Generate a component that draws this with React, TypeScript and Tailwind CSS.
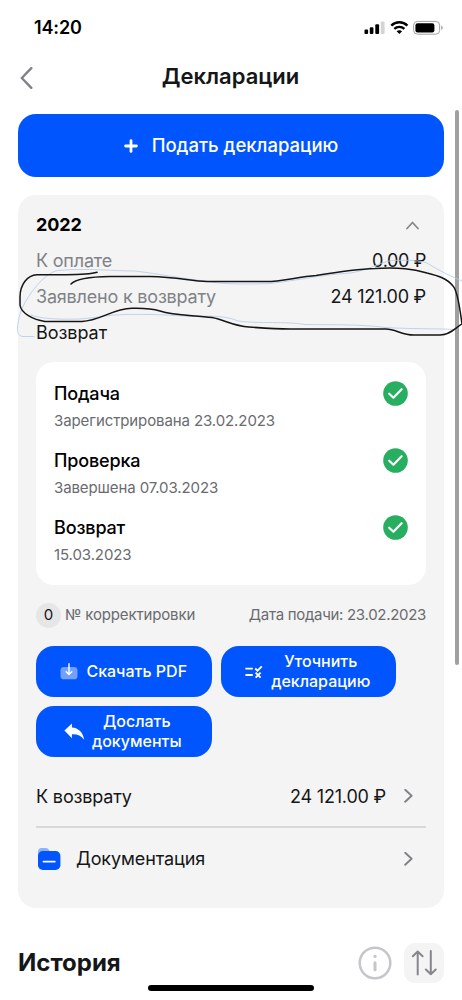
import React from "react";

const steps = [
    { name: "Подача", note: "Зарегистрирована 23.02.2023" },
    { name: "Проверка", note: "Завершена 07.03.2023" },
    { name: "Возврат", note: "15.03.2023" },
];

const StatusBar = () => (
    <div className="h-[54px] pt-px pl-[34px] pr-[19px] flex items-center justify-between">
        <span className="text-[18px] tracking-[-0.15px] font-semibold text-black">14:20</span>
        <svg width="79" height="16" viewBox="0 0 79 16">
            <rect x="0.5" y="9.5" width="3.6" height="4.5" rx="1" fill="#000" />
            <rect x="5.8" y="7.3" width="3.6" height="6.7" rx="1" fill="#000" />
            <rect x="11.3" y="4.3" width="3.8" height="9.7" rx="1" fill="#000" />
            <rect x="16.8" y="1.5" width="3.8" height="12.5" rx="1" fill="#d4d4d4" />
            <g fill="none" stroke="#000" strokeWidth="2.4">
                <path d="M27.3 5.6C31.8 1.2 38.9 1.2 43.4 5.6" />
                <path d="M30.3 8.9C33.2 6.2 37.5 6.2 40.4 8.9" />
            </g>
            <path d="M32.6 11.2C34.2 9.8 36.5 9.8 38.1 11.2L35.35 14Z" fill="#000" />
            <rect x="49.6" y="1.4" width="26" height="12.8" rx="3.8" fill="none" stroke="#a3a3a3" />
            <rect x="51.4" y="3.2" width="19" height="9.2" rx="2.2" fill="#000" />
            <path d="M77.2 5.6C79.2 6.3 79.2 9.3 77.2 10Z" fill="#a3a3a3" />
        </svg>
    </div>
);

const ChevronRight = () => (
    <svg width="9" height="14" viewBox="0 0 9 14" fill="none" stroke="#808287" strokeWidth="1.9" strokeLinecap="round" strokeLinejoin="round">
        <path d="M1.2 0.8L7.6 6.8L1.2 12.8" />
    </svg>
);

const CheckBadge = () => (
    <svg width="25" height="25" viewBox="0 0 25 25">
        <circle cx="12.5" cy="12.5" r="12.3" fill="#27ae60" />
        <path d="M6.2 12.7L10.4 16.7L18.6 8.2" fill="none" stroke="#fff" strokeWidth="2.2" strokeLinecap="round" strokeLinejoin="round" />
    </svg>
);

const DownloadIcon = () => (
    <svg className="shrink-0" width="18" height="18" viewBox="0 0 18 18">
        <rect x="0.5" y="4" width="17" height="12.3" rx="3.4" fill="#fff" opacity="0.45" />
        <path d="M9 0.8V11.4M6.2 8.8L9 11.6L11.8 8.8" fill="none" stroke="#fff" strokeWidth="1.4" strokeLinecap="round" strokeLinejoin="round" />
    </svg>
);

const RulesIcon = () => (
    <svg className="shrink-0" width="18" height="14" viewBox="0 0 18 14" fill="none" stroke="#fff" strokeWidth="1.9">
        <path d="M0.4 3.6H7.8M0.4 10H7.8" />
        <path d="M10.2 3.5L12.5 5.6L16.8 1.3" />
        <path d="M10.6 7.6L15.6 12.6M15.6 7.6L10.6 12.6" />
    </svg>
);

const ReplyIcon = () => (
    <svg className="shrink-0" width="21" height="18" viewBox="0 0 21 18">
        <path d="M0.4 7.6L7.9 0.4V4.5C14.6 5 19 9.4 20.2 16.8C17 12.5 13.2 10.9 7.9 11.2V15.2Z" fill="#fff" />
    </svg>
);

const FolderIcon = () => (
    <svg width="24" height="24" viewBox="0 0 24 24">
        <path d="M1 10V4.5C1 2.4 2.4 0.9 4.3 0.9H8.6C10.8 0.9 12 2.3 12.9 5V8Z" fill="#8fb2ff" />
        <rect x="1" y="4" width="22.4" height="19" rx="4.8" fill="#0055ff" />
        <path d="M6.5 14.6H17.8" stroke="#fff" strokeWidth="1.9" strokeLinecap="round" />
    </svg>
);

const PenMarks = () => (
    <svg className="absolute left-0 top-0 pointer-events-none" width="462" height="345" viewBox="0 0 462 345" fill="none" strokeLinecap="round">
        <path
            d="M34 336.5H23C17 336 17 330 18 323C20 308 30 292 42 280C48 275 53 270.5 60 270.3C85 268 115 271 135 271C160 274 185 279 205 281C220 284 240 284.5 270 283.5C300 280 320 275 350 273C370 270 380 262 392 260.5C405 260 420 260 427 263C438 270 450 276 462 281M31 315C40 319 60 319.5 80 319C95 318 110 314.5 125 314.5C150 314 170 315 190 316.5C205 316 225 315 238 321C260 324 285 321 305 324.5C330 325 360 324 385 327.5C410 329 435 328.5 455 329.5"
            stroke="#b4cae9"
            strokeWidth="0.8"
        />
        <path
            d="M97 272.3C88 275 74 274.6 60 274.7H37C27 275 20 285 20 297V305C21 313 33 320 45 321.4H82C100 321 112 308.7 132 308.3C144 308 152 308.5 160 311C175 316 195 315 212 317.6C225 320 233 326 249 327C262 328 276 329 290 329H386C396 329 401 335 414 335H440C450 335 455 328 462 324C460 310 458 291 453 286C447 278 437 275.5 427 273C413 269 400 267 375 268.4C355 269 337 272 316 275.5C298 277 280 281.5 267 281.5H207C190 281 178 277 150 276.4H110C95 276.6 76 278.5 71 284"
            stroke="#151515"
            strokeWidth="1.5"
        />
    </svg>
);

const App = () => {
    return (
        <div className="relative w-[462px] h-[1000px] overflow-hidden bg-white text-[#151618] font-['Inter','Liberation_Sans',sans-serif]">
            <StatusBar />

            {/* Header */}
            <header className="h-[46px] mb-[14px] px-5 grid grid-cols-[16px_1fr_16px] items-center">
                <svg width="14" height="23" viewBox="0 0 14 23" fill="none" stroke="#808287" strokeWidth="2.4" strokeLinecap="round" strokeLinejoin="round">
                    <path d="M11.3 2.2L1.8 12L11.3 21.8" />
                </svg>
                <h1 className="pb-0.5 pr-px text-center text-[22px] leading-7 font-semibold">Декларации</h1>
            </header>

            <main className="px-[18px]">
                <button className="w-full h-[63px] rounded-[18px] bg-[#0055ff] text-white flex items-center justify-center gap-[14px]">
                    <svg width="14" height="14" viewBox="0 0 14 14" stroke="#fff" strokeWidth="2.8" strokeLinecap="round">
                        <path d="M7 1.6V12.4M1.6 7H12.4" />
                    </svg>
                    <span className="text-[18.5px] font-medium">Подать декларацию</span>
                </button>

                {/* Declaration card */}
                <section className="mt-[18px] h-[713px] rounded-[18px] bg-[#f4f4f4] px-[18px] pt-[11px]">
                    <div className="h-9 flex items-center justify-between pr-[7px]">
                        <h2 className="text-[18px] tracking-[-0.1px] font-bold text-black">2022</h2>
                        <svg className="mt-[3px]" width="13" height="9" viewBox="0 0 13 9" fill="none" stroke="#88898d" strokeWidth="1.8" strokeLinecap="round" strokeLinejoin="round">
                            <path d="M1 7.5L6.5 1.5L12 7.5" />
                        </svg>
                    </div>
                    <div className="h-9 flex items-center justify-between text-[18px] tracking-[-0.2px]">
                        <span className="text-[#808287]">К оплате</span>
                        <span className="tracking-[-0.35px]">0.00 ₽</span>
                    </div>
                    <div className="h-9 flex items-center justify-between text-[18px] tracking-[-0.2px]">
                        <span className="text-[#808287]">Заявлено к возврату</span>
                        <span className="tracking-[-0.25px]">24 121.00 ₽</span>
                    </div>
                    <div className="h-9 flex items-center text-[18px] tracking-[-0.05px]">Возврат</div>

                    <div className="mt-3 h-[223px] rounded-[18px] bg-white px-[18px] pt-[18px] flex flex-col gap-[15px]">
                        {steps.map((step) => (
                            <div key={step.name} className="flex justify-between">
                                <div>
                                    <div className="text-[18px] leading-7 tracking-[-0.15px] font-medium text-black">{step.name}</div>
                                    <div className="pt-px text-[15px] leading-[23px] tracking-[-0.1px] text-[#6a6b6f]">{step.note}</div>
                                </div>
                                <div className="h-[27px] flex items-center">
                                    <CheckBadge />
                                </div>
                            </div>
                        ))}
                    </div>

                    <div className="mt-[18px] h-[25px] flex items-center justify-between text-[15px] text-[#6a6b6f]">
                        <div className="flex items-center gap-1">
                            <span className="size-[25px] rounded-full bg-[#e6e6e6] text-[#151618] flex items-center justify-center">0</span>
                            <span className="tracking-[-0.15px]">№ корректировки</span>
                        </div>
                        <span className="tracking-[-0.3px]">Дата подачи: 23.02.2023</span>
                    </div>

                    {/* Actions */}
                    <div className="mt-[18px] flex flex-wrap gap-[9px] text-white text-[16px] leading-[19.5px] font-medium text-center">
                        <button className="w-[175.5px] h-[51px] rounded-[18px] bg-[#0055ff] flex items-center justify-center gap-[8px]">
                            <DownloadIcon />
                            <span>Скачать PDF</span>
                        </button>
                        <button className="w-[175.5px] h-[51px] rounded-[18px] bg-[#0055ff] flex items-center justify-center gap-[8px] pr-px">
                            <RulesIcon />
                            <span>Уточнить<br />декларацию</span>
                        </button>
                        <button className="w-[175.5px] h-[51px] rounded-[18px] bg-[#0055ff] flex items-center justify-center gap-[7px] pr-[2px]">
                            <ReplyIcon />
                            <span>Дослать<br />документы</span>
                        </button>
                    </div>

                    <div className="mt-[9px] h-[62px] border-b-2 border-[#d9d9d9] pr-[13px] flex items-center text-[18px]">
                        <span className="tracking-[-0.15px]">К возврату</span>
                        <span className="ml-auto mr-[18px] tracking-[-0.2px]">24 121.00 ₽</span>
                        <ChevronRight />
                    </div>
                    <div className="h-[61px] pl-[1px] pr-[13px] flex items-center text-[18px]">
                        <FolderIcon />
                        <span className="ml-[15px] mr-auto tracking-[-0.1px]">Документация</span>
                        <ChevronRight />
                    </div>
                </section>

                {/* History */}
                <div className="mt-[34px] h-[41px] flex items-center">
                    <h2 className="mr-auto text-[24px] font-bold">История</h2>
                    <svg className="mr-3" width="34" height="34" viewBox="0 0 34 34">
                        <circle cx="17" cy="17" r="15.3" fill="none" stroke="#c5c6c9" strokeWidth="2.5" />
                        <circle cx="17" cy="10.3" r="1.6" fill="#c5c6c9" />
                        <path d="M17 16.7V23.8" stroke="#c5c6c9" strokeWidth="3" strokeLinecap="round" />
                    </svg>
                    <button className="size-10 rounded-[11px] bg-[#f4f4f4] flex items-center justify-center">
                        <svg width="26" height="26" viewBox="0 0 26 26" fill="none" stroke="#85878c" strokeWidth="2" strokeLinecap="round" strokeLinejoin="round">
                            <path d="M6.7 24.5V1.5M1.8 6.2L6.7 1.5L11.6 6.2" />
                            <path d="M19.8 1V24.2M14.9 19.5L19.8 24.2L24.7 19.5" />
                        </svg>
                    </button>
                </div>
            </main>

            <div className="absolute right-[3px] top-[110px] w-[4px] h-[555px] rounded-full bg-[#a0a0a0]" />
            <PenMarks />
            <div className="absolute left-[148px] top-[985px] w-[166px] h-[6px] rounded-full bg-black" />
        </div>
    );
};

export default App;
